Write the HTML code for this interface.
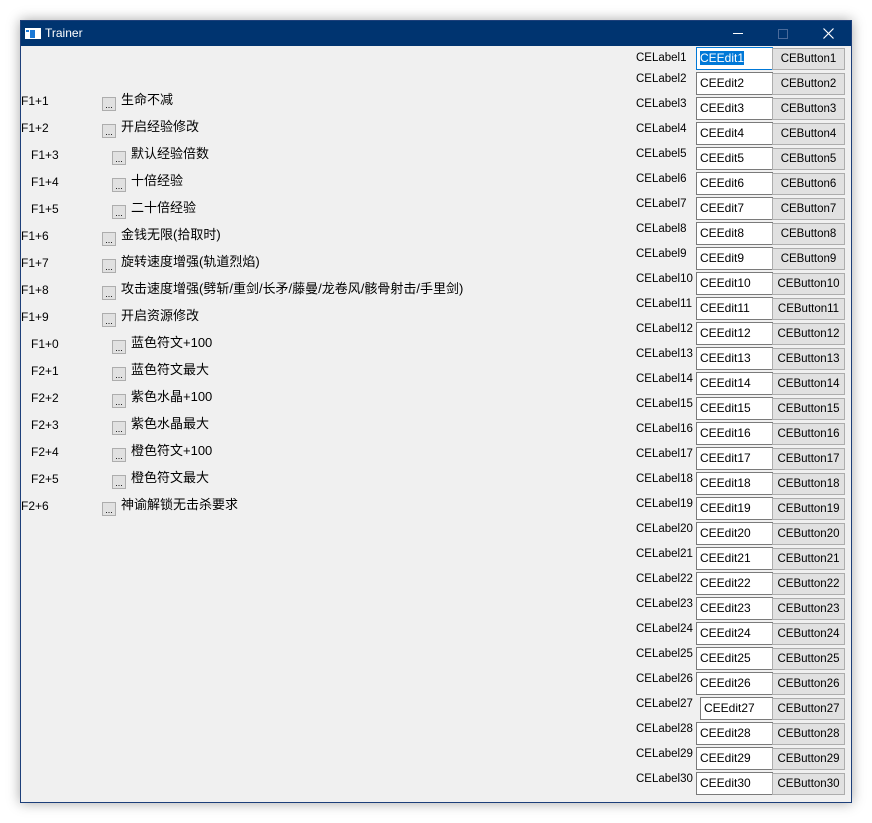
<!DOCTYPE html>
<html><head><meta charset="utf-8"><style>
*{margin:0;padding:0;box-sizing:border-box}
body{width:872px;height:823px;background:#fff;position:relative;overflow:hidden;font-family:"Liberation Sans","Noto Sans CJK SC",sans-serif;font-size:12px;color:#000}
#win{position:absolute;left:20px;top:20px;width:832px;height:783px;background:#f0f0f0;border:1px solid #1d3f7a;box-shadow:0 0 12px rgba(0,0,0,.35)}
#tb{position:absolute;left:0;top:0;width:830px;height:25px;background:#003470;color:#fff}
#tb .t{position:absolute;left:24px;top:5px;font-size:12px}
.a{position:absolute;white-space:nowrap;line-height:14px}
.c{font-size:13px;line-height:15px}
.cb{position:absolute;width:14px;height:14px;background:#e1e1e1;border:1px solid #adadad;font-size:9px;line-height:14px;text-align:center;color:#000}
.ed{position:absolute;left:675px;width:77px;height:23px;background:#fff;border:1px solid #7a7a7a;padding:3px 0 0 3px;line-height:15px;font-size:12px}
.bt{position:absolute;left:751px;width:73px;height:22px;background:#e1e1e1;border:1px solid #adadad;text-align:center;line-height:21px;font-size:11.5px}
.lb{position:absolute;left:615px;line-height:14px;font-size:11.5px}
</style></head><body>
<div id="win">
<div id="tb">
<svg style="position:absolute;left:4px;top:7px" width="16" height="11"><rect x="0" y="0" width="16" height="11" fill="#fff"/><rect x="5" y="2" width="5" height="8" fill="#1a78d6"/><rect x="1" y="2" width="3" height="2" fill="#1a78d6"/></svg>
<span class="t">Trainer</span>
<div style="position:absolute;left:712px;top:12px;width:10px;height:1px;background:#fff"></div>
<div style="position:absolute;left:757px;top:8px;width:10px;height:10px;border:1px solid #4a6a9a"></div>
<svg style="position:absolute;left:802px;top:7px" width="11" height="11"><path d="M0.5 0.5L10.5 10.5M10.5 0.5L0.5 10.5" stroke="#fff" stroke-width="1.2"/></svg>
</div>

<div class="a" style="left:0;top:73px">F1+1</div><div class="cb" style="left:81px;top:76px">...</div><div class="a c" style="left:100px;top:71px">生命不减</div>
<div class="a" style="left:0;top:100px">F1+2</div><div class="cb" style="left:81px;top:103px">...</div><div class="a c" style="left:100px;top:98px">开启经验修改</div>
<div class="a" style="left:10px;top:127px">F1+3</div><div class="cb" style="left:91px;top:130px">...</div><div class="a c" style="left:110px;top:125px">默认经验倍数</div>
<div class="a" style="left:10px;top:154px">F1+4</div><div class="cb" style="left:91px;top:157px">...</div><div class="a c" style="left:110px;top:152px">十倍经验</div>
<div class="a" style="left:10px;top:181px">F1+5</div><div class="cb" style="left:91px;top:184px">...</div><div class="a c" style="left:110px;top:179px">二十倍经验</div>
<div class="a" style="left:0;top:208px">F1+6</div><div class="cb" style="left:81px;top:211px">...</div><div class="a c" style="left:100px;top:206px">金钱无限(拾取时)</div>
<div class="a" style="left:0;top:235px">F1+7</div><div class="cb" style="left:81px;top:238px">...</div><div class="a c" style="left:100px;top:233px">旋转速度增强(轨道烈焰)</div>
<div class="a" style="left:0;top:262px">F1+8</div><div class="cb" style="left:81px;top:265px">...</div><div class="a c" style="left:100px;top:260px">攻击速度增强(劈斩/重剑/长矛/藤曼/龙卷风/骸骨射击/手里剑)</div>
<div class="a" style="left:0;top:289px">F1+9</div><div class="cb" style="left:81px;top:292px">...</div><div class="a c" style="left:100px;top:287px">开启资源修改</div>
<div class="a" style="left:10px;top:316px">F1+0</div><div class="cb" style="left:91px;top:319px">...</div><div class="a c" style="left:110px;top:314px">蓝色符文+100</div>
<div class="a" style="left:10px;top:343px">F2+1</div><div class="cb" style="left:91px;top:346px">...</div><div class="a c" style="left:110px;top:341px">蓝色符文最大</div>
<div class="a" style="left:10px;top:370px">F2+2</div><div class="cb" style="left:91px;top:373px">...</div><div class="a c" style="left:110px;top:368px">紫色水晶+100</div>
<div class="a" style="left:10px;top:397px">F2+3</div><div class="cb" style="left:91px;top:400px">...</div><div class="a c" style="left:110px;top:395px">紫色水晶最大</div>
<div class="a" style="left:10px;top:424px">F2+4</div><div class="cb" style="left:91px;top:427px">...</div><div class="a c" style="left:110px;top:422px">橙色符文+100</div>
<div class="a" style="left:10px;top:451px">F2+5</div><div class="cb" style="left:91px;top:454px">...</div><div class="a c" style="left:110px;top:449px">橙色符文最大</div>
<div class="a" style="left:0;top:478px">F2+6</div><div class="cb" style="left:81px;top:481px">...</div><div class="a c" style="left:100px;top:476px">神谕解锁无击杀要求</div>

<div class="lb" style="top:30px">CELabel1</div><div class="ed" style="top:26px;border:1px solid #0078d7"><span style="background:#0078d7;color:#fff">CEEdit1</span></div><div class="bt" style="top:27px">CEButton1</div>
<div class="lb" style="top:51px">CELabel2</div><div class="ed" style="top:51px">CEEdit2</div><div class="bt" style="top:52px">CEButton2</div>
<div class="lb" style="top:76px">CELabel3</div><div class="ed" style="top:76px">CEEdit3</div><div class="bt" style="top:77px">CEButton3</div>
<div class="lb" style="top:101px">CELabel4</div><div class="ed" style="top:101px">CEEdit4</div><div class="bt" style="top:102px">CEButton4</div>
<div class="lb" style="top:126px">CELabel5</div><div class="ed" style="top:126px">CEEdit5</div><div class="bt" style="top:127px">CEButton5</div>
<div class="lb" style="top:151px">CELabel6</div><div class="ed" style="top:151px">CEEdit6</div><div class="bt" style="top:152px">CEButton6</div>
<div class="lb" style="top:176px">CELabel7</div><div class="ed" style="top:176px">CEEdit7</div><div class="bt" style="top:177px">CEButton7</div>
<div class="lb" style="top:201px">CELabel8</div><div class="ed" style="top:201px">CEEdit8</div><div class="bt" style="top:202px">CEButton8</div>
<div class="lb" style="top:226px">CELabel9</div><div class="ed" style="top:226px">CEEdit9</div><div class="bt" style="top:227px">CEButton9</div>
<div class="lb" style="top:251px">CELabel10</div><div class="ed" style="top:251px">CEEdit10</div><div class="bt" style="top:252px">CEButton10</div>
<div class="lb" style="top:276px">CELabel11</div><div class="ed" style="top:276px">CEEdit11</div><div class="bt" style="top:277px">CEButton11</div>
<div class="lb" style="top:301px">CELabel12</div><div class="ed" style="top:301px">CEEdit12</div><div class="bt" style="top:302px">CEButton12</div>
<div class="lb" style="top:326px">CELabel13</div><div class="ed" style="top:326px">CEEdit13</div><div class="bt" style="top:327px">CEButton13</div>
<div class="lb" style="top:351px">CELabel14</div><div class="ed" style="top:351px">CEEdit14</div><div class="bt" style="top:352px">CEButton14</div>
<div class="lb" style="top:376px">CELabel15</div><div class="ed" style="top:376px">CEEdit15</div><div class="bt" style="top:377px">CEButton15</div>
<div class="lb" style="top:401px">CELabel16</div><div class="ed" style="top:401px">CEEdit16</div><div class="bt" style="top:402px">CEButton16</div>
<div class="lb" style="top:426px">CELabel17</div><div class="ed" style="top:426px">CEEdit17</div><div class="bt" style="top:427px">CEButton17</div>
<div class="lb" style="top:451px">CELabel18</div><div class="ed" style="top:451px">CEEdit18</div><div class="bt" style="top:452px">CEButton18</div>
<div class="lb" style="top:476px">CELabel19</div><div class="ed" style="top:476px">CEEdit19</div><div class="bt" style="top:477px">CEButton19</div>
<div class="lb" style="top:501px">CELabel20</div><div class="ed" style="top:501px">CEEdit20</div><div class="bt" style="top:502px">CEButton20</div>
<div class="lb" style="top:526px">CELabel21</div><div class="ed" style="top:526px">CEEdit21</div><div class="bt" style="top:527px">CEButton21</div>
<div class="lb" style="top:551px">CELabel22</div><div class="ed" style="top:551px">CEEdit22</div><div class="bt" style="top:552px">CEButton22</div>
<div class="lb" style="top:576px">CELabel23</div><div class="ed" style="top:576px">CEEdit23</div><div class="bt" style="top:577px">CEButton23</div>
<div class="lb" style="top:601px">CELabel24</div><div class="ed" style="top:601px">CEEdit24</div><div class="bt" style="top:602px">CEButton24</div>
<div class="lb" style="top:626px">CELabel25</div><div class="ed" style="top:626px">CEEdit25</div><div class="bt" style="top:627px">CEButton25</div>
<div class="lb" style="top:651px">CELabel26</div><div class="ed" style="top:651px">CEEdit26</div><div class="bt" style="top:652px">CEButton26</div>
<div class="lb" style="top:676px">CELabel27</div><div class="ed" style="top:676px;left:679px;width:73px">CEEdit27</div><div class="bt" style="top:677px">CEButton27</div>
<div class="lb" style="top:701px">CELabel28</div><div class="ed" style="top:701px">CEEdit28</div><div class="bt" style="top:702px">CEButton28</div>
<div class="lb" style="top:726px">CELabel29</div><div class="ed" style="top:726px">CEEdit29</div><div class="bt" style="top:727px">CEButton29</div>
<div class="lb" style="top:751px">CELabel30</div><div class="ed" style="top:751px">CEEdit30</div><div class="bt" style="top:752px">CEButton30</div>
</div>
</body></html>
